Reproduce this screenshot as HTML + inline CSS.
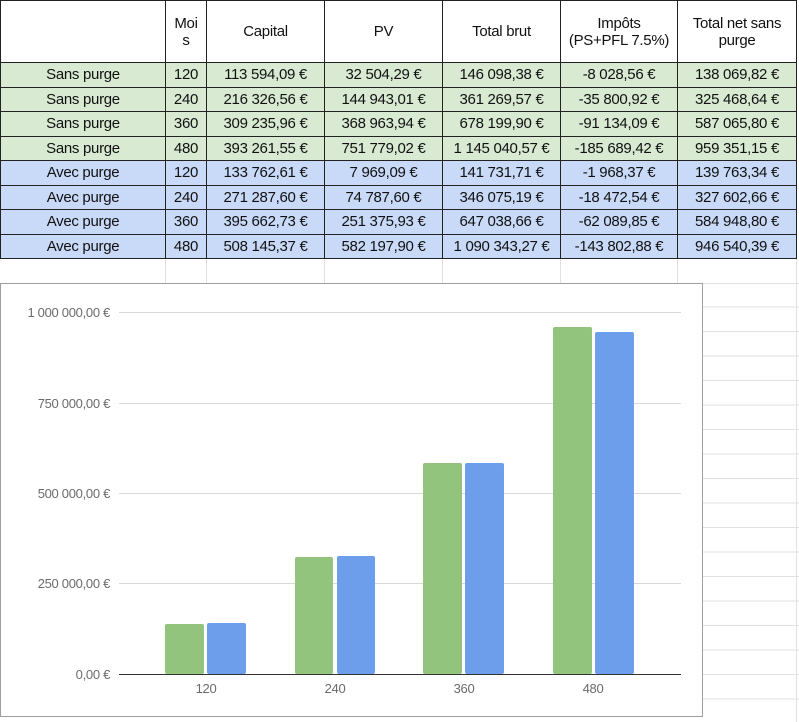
<!DOCTYPE html>
<html><head><meta charset="utf-8"><style>
body{margin:0;width:799px;height:722px;background:#fff;position:relative;overflow:hidden;font-family:"Liberation Sans",Arial,sans-serif;}
table{position:absolute;left:0;top:0;border-collapse:collapse;font-size:15px;color:#111;}
td{border:1px solid #222;text-align:center;padding:0;height:23.5px;line-height:17px;white-space:nowrap;letter-spacing:-0.3px;}
tr.h td{height:61px;background:#fff;}
tr.g td{background:#d9ead3;}
tr.b td{background:#c9daf8;}
.gl{position:absolute;background:#e2e2e2;}
.ax{font-size:13px;fill:#6b6b6b;font-family:"Liberation Sans",Arial,sans-serif;letter-spacing:-0.3px;}
</style></head><body>
<div class="gl" style="left:0;top:283px;width:799px;height:1px"></div>
<div class="gl" style="left:165px;top:259px;width:1px;height:24px"></div>
<div class="gl" style="left:206px;top:259px;width:1px;height:24px"></div>
<div class="gl" style="left:324px;top:259px;width:1px;height:24px"></div>
<div class="gl" style="left:442px;top:259px;width:1px;height:24px"></div>
<div class="gl" style="left:560px;top:259px;width:1px;height:24px"></div>
<div class="gl" style="left:677px;top:259px;width:1px;height:24px"></div>
<div class="gl" style="left:796px;top:259px;width:1px;height:463px"></div>
<div style="position:absolute;left:703px;top:283px;width:96px;height:439px;background:repeating-linear-gradient(to bottom,transparent 0,transparent 23.5px,#e2e2e2 23.5px,#e2e2e2 24.5px)"></div>
<table>
<colgroup><col style="width:165px"><col style="width:41px"><col style="width:118px"><col style="width:118px"><col style="width:118px"><col style="width:117px"><col style="width:119px"></colgroup>
<tr class="h"><td></td><td>Moi<br>s</td><td>Capital</td><td>PV</td><td>Total brut</td><td>Impôts<br>(PS+PFL 7.5%)</td><td>Total net sans<br>purge</td></tr>
<tr class="g"><td>Sans purge</td><td>120</td><td>113 594,09 €</td><td>32 504,29 €</td><td>146 098,38 €</td><td>-8 028,56 €</td><td>138 069,82 €</td></tr>
<tr class="g"><td>Sans purge</td><td>240</td><td>216 326,56 €</td><td>144 943,01 €</td><td>361 269,57 €</td><td>-35 800,92 €</td><td>325 468,64 €</td></tr>
<tr class="g"><td>Sans purge</td><td>360</td><td>309 235,96 €</td><td>368 963,94 €</td><td>678 199,90 €</td><td>-91 134,09 €</td><td>587 065,80 €</td></tr>
<tr class="g"><td>Sans purge</td><td>480</td><td>393 261,55 €</td><td>751 779,02 €</td><td>1 145 040,57 €</td><td>-185 689,42 €</td><td>959 351,15 €</td></tr>
<tr class="b"><td>Avec purge</td><td>120</td><td>133 762,61 €</td><td>7 969,09 €</td><td>141 731,71 €</td><td>-1 968,37 €</td><td>139 763,34 €</td></tr>
<tr class="b"><td>Avec purge</td><td>240</td><td>271 287,60 €</td><td>74 787,60 €</td><td>346 075,19 €</td><td>-18 472,54 €</td><td>327 602,66 €</td></tr>
<tr class="b"><td>Avec purge</td><td>360</td><td>395 662,73 €</td><td>251 375,93 €</td><td>647 038,66 €</td><td>-62 089,85 €</td><td>584 948,80 €</td></tr>
<tr class="b"><td>Avec purge</td><td>480</td><td>508 145,37 €</td><td>582 197,90 €</td><td>1 090 343,27 €</td><td>-143 802,88 €</td><td>946 540,39 €</td></tr>
</table>
<svg style="position:absolute;left:0;top:283px" width="704" height="436" viewBox="0 283 704 436">
<rect x="0.5" y="283.5" width="702" height="433" fill="#fff" stroke="#9e9e9e"/>
<g stroke="#d9d9d9" stroke-width="1">
<line x1="119" x2="681" y1="312.5" y2="312.5"/>
<line x1="119" x2="681" y1="403.5" y2="403.5"/>
<line x1="119" x2="681" y1="493.5" y2="493.5"/>
<line x1="119" x2="681" y1="583.5" y2="583.5"/>
</g>
<g class="ax" text-anchor="end">
<text x="110" y="317">1 000 000,00 €</text>
<text x="110" y="408">750 000,00 €</text>
<text x="110" y="498">500 000,00 €</text>
<text x="110" y="588">250 000,00 €</text>
<text x="110" y="679">0,00 €</text>
</g>
<g fill="#93c47d">
<rect x="165" y="624" width="39" height="50" rx="2"/>
<rect x="295" y="557" width="38" height="117" rx="2"/>
<rect x="423" y="463" width="39" height="211" rx="2"/>
<rect x="553" y="327" width="39" height="347" rx="2"/>
</g>
<g fill="#6d9eeb">
<rect x="207" y="623" width="39" height="51" rx="2"/>
<rect x="337" y="556" width="38" height="118" rx="2"/>
<rect x="465" y="463" width="39" height="211" rx="2"/>
<rect x="595" y="332" width="39" height="342" rx="2"/>
</g>
<line x1="119" x2="681" y1="674.5" y2="674.5" stroke="#333"/>
<g class="ax" text-anchor="middle">
<text x="206" y="693">120</text>
<text x="335" y="693">240</text>
<text x="464" y="693">360</text>
<text x="593" y="693">480</text>
</g>
</svg>
</body></html>
